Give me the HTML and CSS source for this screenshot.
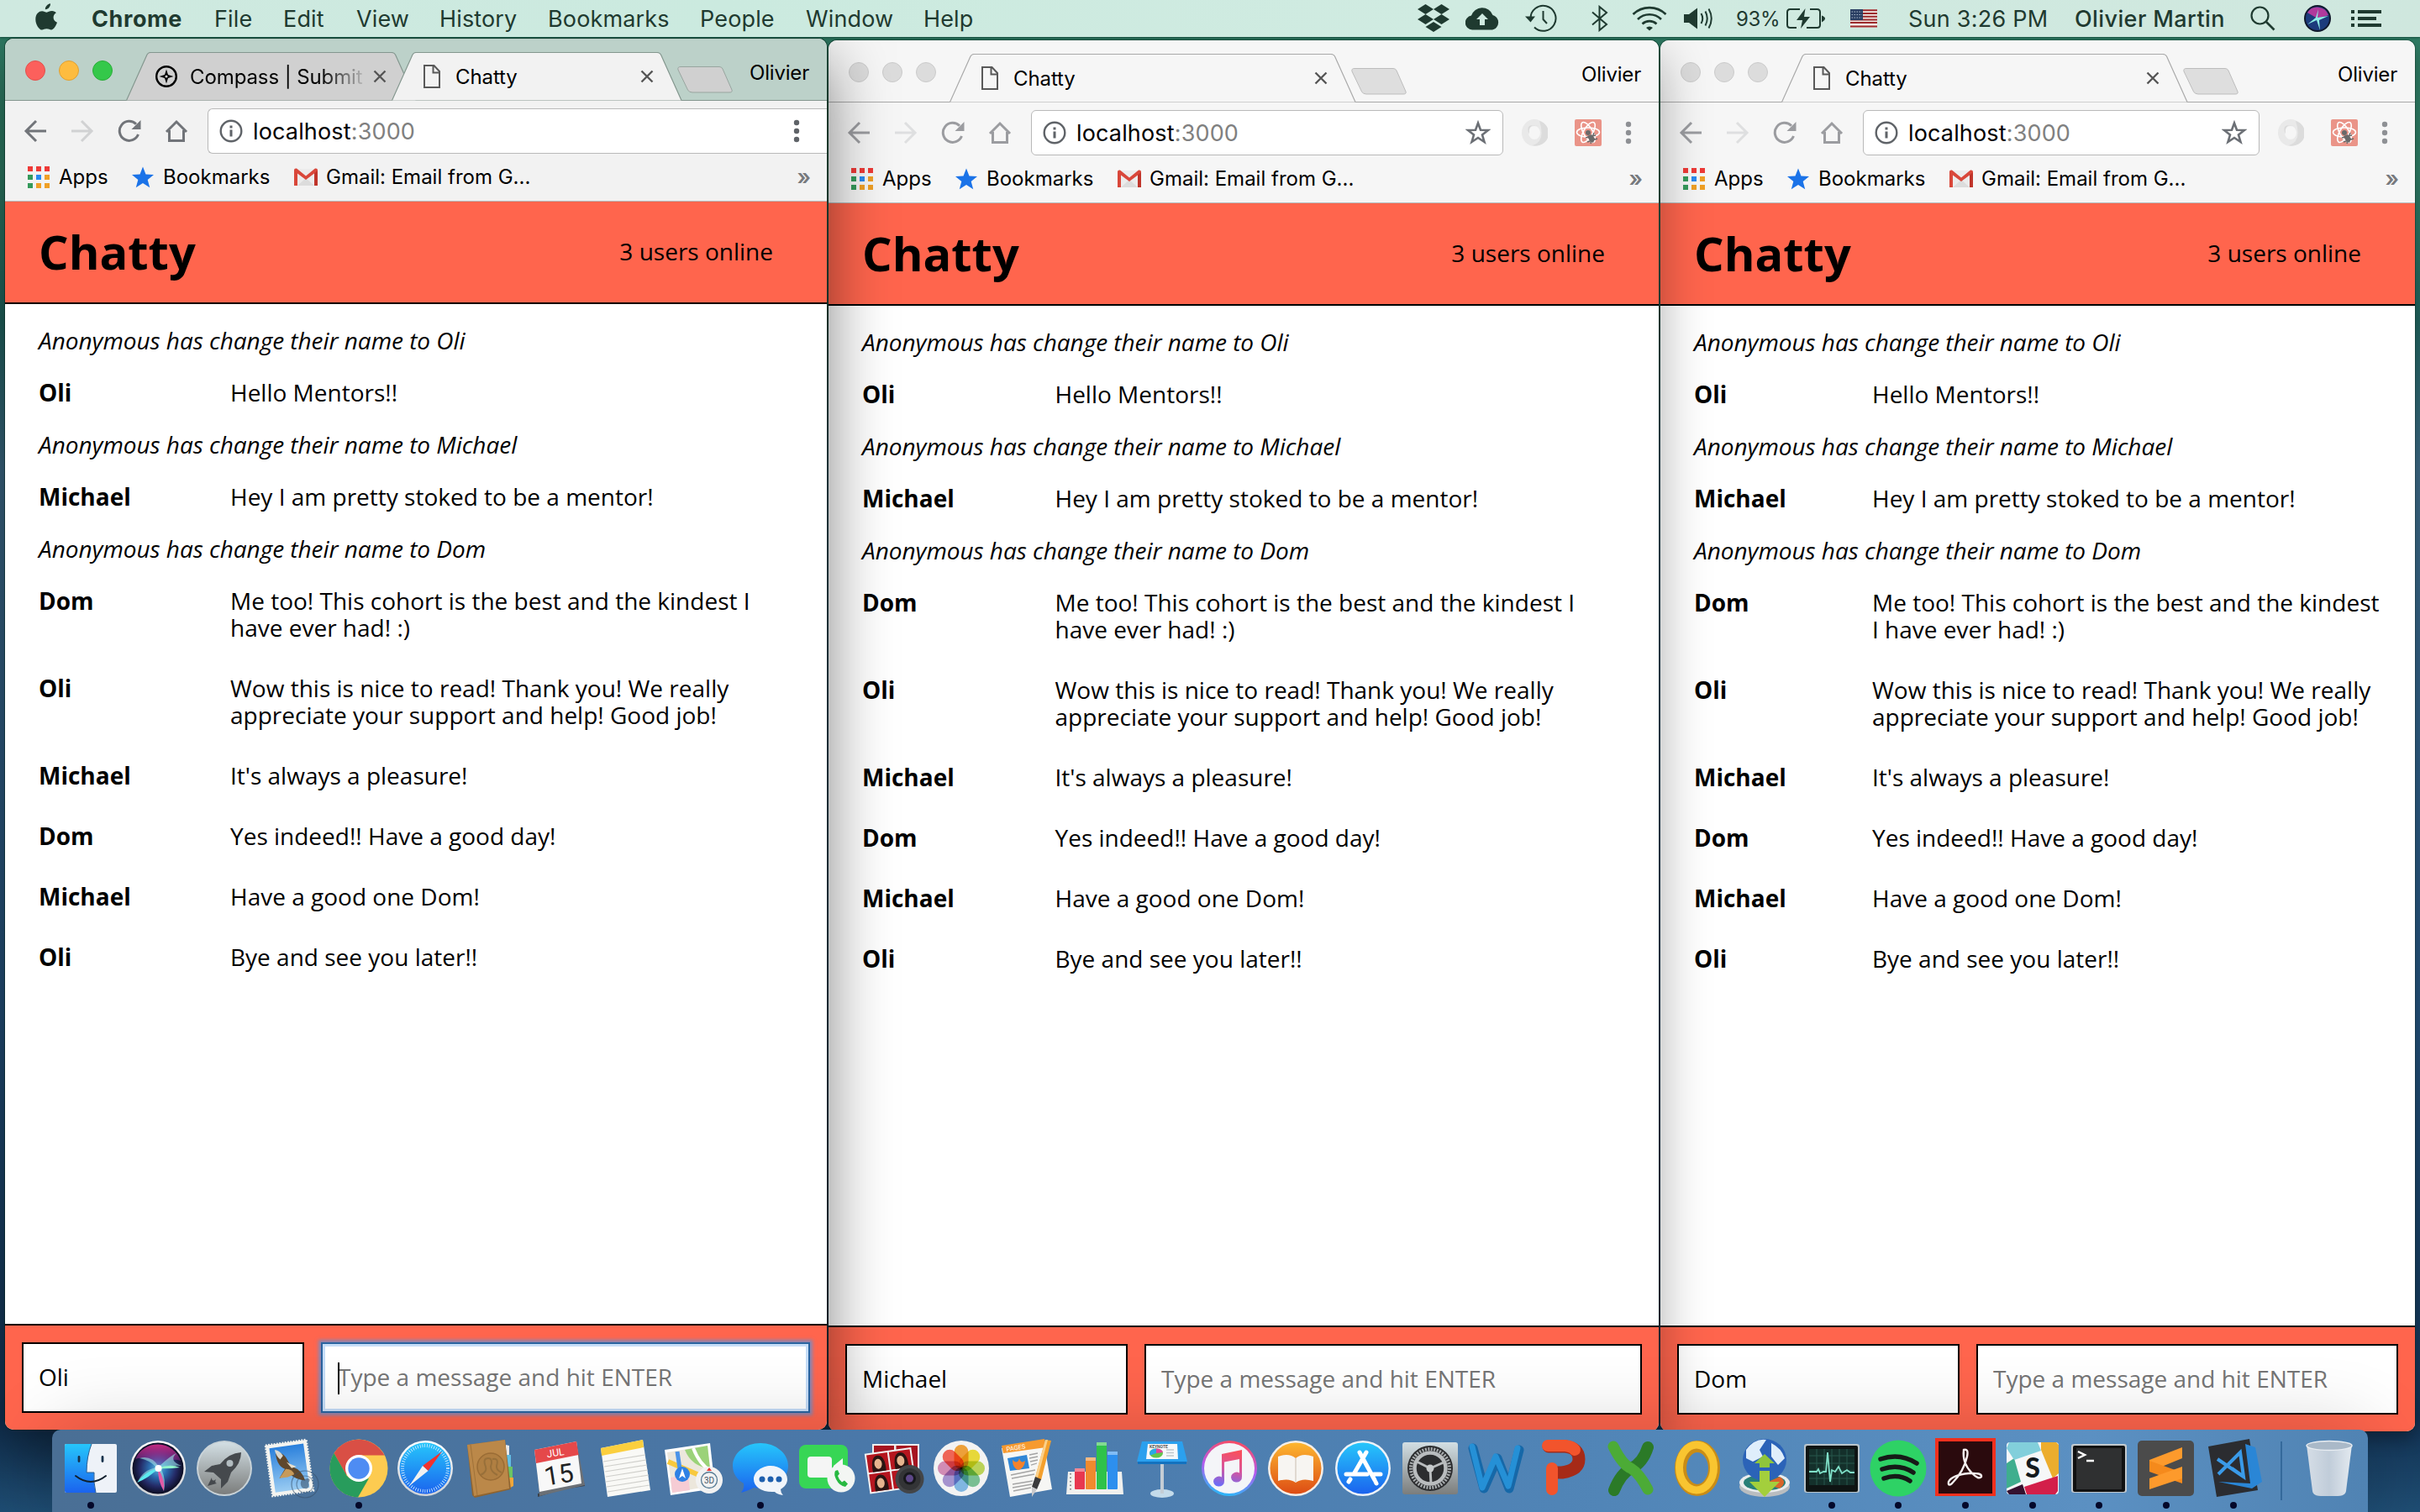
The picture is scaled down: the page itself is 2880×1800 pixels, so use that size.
FILE: index.html
```html
<!DOCTYPE html>
<html lang="en">
<head>
<meta charset="utf-8">
<title>Chatty</title>
<link rel="stylesheet" href="styles.css">
</head>
<body>
<svg class="defs" aria-hidden="true">
  <defs>
    <linearGradient id="gSilver" x1="0" y1="0" x2="0" y2="1"><stop offset="0" stop-color="#fff"/><stop offset="1" stop-color="#cfd2d6"/></linearGradient>
    <linearGradient id="gBlue" x1="0" y1="0" x2="0" y2="1"><stop offset="0" stop-color="#26c6fb"/><stop offset="1" stop-color="#1b63ee"/></linearGradient>
    <linearGradient id="gSky" x1="0" y1="0" x2="0" y2="1"><stop offset="0" stop-color="#2a80dc"/><stop offset="1" stop-color="#9accf2"/></linearGradient>
    <linearGradient id="gOrange" x1="0" y1="0" x2="0" y2="1"><stop offset="0" stop-color="#fdb62f"/><stop offset="1" stop-color="#dd4c14"/></linearGradient>
    <linearGradient id="gGray" x1="0" y1="0" x2="0" y2="1"><stop offset="0" stop-color="#d3dfe4"/><stop offset="1" stop-color="#7b7d7c"/></linearGradient>
    <linearGradient id="gTunes" x1="0.6" y1="0" x2="0.4" y2="1"><stop offset="0" stop-color="#fb4b5f"/><stop offset="0.5" stop-color="#b45bf0"/><stop offset="1" stop-color="#28b9f8"/></linearGradient>
    <linearGradient id="gNote" x1="0.6" y1="0" x2="0.4" y2="1"><stop offset="0" stop-color="#f94f5c"/><stop offset="0.5" stop-color="#d9559b"/><stop offset="1" stop-color="#6f6bf5"/></linearGradient>
    <radialGradient id="gSiri"><stop offset="0" stop-color="#5ab7e0"/><stop offset="0.35" stop-color="#2b6cae"/><stop offset="0.7" stop-color="#242a66"/><stop offset="1" stop-color="#0c0d22"/></radialGradient>
    <linearGradient id="gPink" x1="0" y1="0" x2="0" y2="1"><stop offset="0" stop-color="#c42a80"/><stop offset="1" stop-color="#8a2ba0" stop-opacity="0.2"/></linearGradient>
    <linearGradient id="gTrash" x1="0" y1="0" x2="1" y2="0"><stop offset="0" stop-color="#dfe4ea"/><stop offset="0.5" stop-color="#c9d2dc"/><stop offset="1" stop-color="#eef1f4"/></linearGradient>
  </defs>
  <symbol id="tab-narrow" viewBox="0 0 346 58"><path d="M0.5 57.5L25 3Q26.500 .5 29 .5H316Q319 .5 320.500 3L345 57.500"/></symbol>
  <symbol id="tab-wide" viewBox="0 0 484 58"><path d="M0.5 57.5L25 3Q26.500 .5 29 .5H454Q457 .5 458.500 3L483 57.500"/></symbol>
  <symbol id="newtab" viewBox="0 0 66 33"><path d="M4 .5H50Q53 .5 54 3L65 28Q66 31 62 31H18Q14 31 12.500 28L1 4Q0 .5 4 .5Z"/></symbol>
  <symbol id="page" viewBox="0 0 26 30"><path d="M4 2H15.500L22 9V28H4ZM14.500 2V10.500H22" fill="none" stroke="#595959" stroke-width="2"/></symbol>
  <symbol id="close" viewBox="0 0 16 16"><path d="M1.500 1.500L14.500 14.500M14.500 1.500L1.500 14.500" stroke="#555" stroke-width="2.400"/></symbol>
  <symbol id="back" viewBox="0 0 28 28"><path d="M27 14H3M15 2L3 14L15 26" fill="none" stroke="currentColor" stroke-width="3"/></symbol>
  <symbol id="forward" viewBox="0 0 28 28"><path d="M1 14H25M13 2L25 14L13 26" fill="none" stroke="currentColor" stroke-width="3"/></symbol>
  <symbol id="reload" viewBox="0 0 28 28"><path d="M24.500 18A11.500 11.500 0 1 1 22 5.800" fill="none" stroke="currentColor" stroke-width="3"/><path d="M27.500 1V12H16.500Z" fill="currentColor"/></symbol>
  <symbol id="home" viewBox="0 0 28 28"><path d="M2 15L14 3L26 15M5.500 13V25.500H22.500V13" fill="none" stroke="currentColor" stroke-width="3"/></symbol>
  <symbol id="info" viewBox="0 0 28 28"><circle cx="14" cy="14" r="12.300" fill="none" stroke="#5f6368" stroke-width="2.400"/><path d="M12.500 7.500h3v3h-3zM12.500 12.500h3v8h-3z" fill="#5f6368"/></symbol>
  <symbol id="star" viewBox="0 0 30 30"><path d="M15 3.500L18 11.800L27 12L20 17.500L22.500 26L15 21L7.500 26L10 17.500L3 12L12 11.800Z" fill="none" stroke="#6b6f75" stroke-width="2.600"/></symbol>
  <symbol id="dots" viewBox="0 0 8 28"><circle cx="4" cy="4" r="3.200"/><circle cx="4" cy="14" r="3.200"/><circle cx="4" cy="24" r="3.200"/></symbol>
  <symbol id="swirl" viewBox="0 0 32 32"><ellipse cx="16" cy="16" rx="11" ry="12" fill="none" stroke="#e9e9e9" stroke-width="8"/><path d="M21 8Q8 4 10 18Q4 4 21 8Z" fill="#d9d9d9"/><path d="M22 2A15 15 0 0 1 14 31Q30 26 22 2Z" fill="#dcdcdc"/></symbol>
  <symbol id="react" viewBox="0 0 32 32"><rect width="32" height="32" rx="2" fill="#ea9488"/><g fill="none" stroke="#fff" stroke-width="1.600"><ellipse cx="16" cy="15.500" rx="13.500" ry="5.500"/><ellipse cx="16" cy="15.500" rx="13.500" ry="5.500" transform="rotate(60 16 15.500)"/><ellipse cx="16" cy="15.500" rx="13.500" ry="5.500" transform="rotate(120 16 15.500)"/></g><circle cx="16" cy="16" r="3" fill="#6a6a6a"/><path d="M15 20L20 18L24 23L22 28L18 26Z" fill="#6a6a6a"/><path d="M13 22L25 19M15 27L27 23M19 29L23 16" stroke="#6a6a6a" stroke-width="1.500"/></symbol>
  <symbol id="apps" viewBox="0 0 26 26"><path fill="#ee3a37" d="M0 0h6v6H0zM10 0h6v6h-6zM20 0h6v6h-6z"/><path fill="#359a5b" d="M0 10h6v6H0zM0 20h6v6H0z"/><path fill="#2a8af0" d="M10 10h6v6h-6z"/><path fill="#efa026" d="M20 10h6v6h-6zM10 20h6v6h-6zM20 20h6v6h-6z"/></symbol>
  <symbol id="bluestar" viewBox="0 0 26 26"><path fill="#1b73e8" d="M13 .5L16.500 9.500L26 10L18.700 16L21.200 25.300L13 20L4.800 25.300L7.300 16L0 10L9.500 9.500Z"/></symbol>
  <symbol id="gmail" viewBox="0 0 28 22"><rect x="1" y="1" width="26" height="20" fill="#ececec"/><path d="M4 21L14 12L24 21Z" fill="#dcdcdc"/><path d="M0 2.500Q0 0 3 .5L14 9.500L25 .5Q28 0 28 2.500V21H24V6.500L14 14L4 6.500V21H0Z" fill="#d9473a"/><path d="M24 6.500L28 3V21H24Z" fill="#c0352b"/></symbol>
</svg>

<header class="menubar">
  <svg class="apple" viewBox="0 0 26 32"><path fill="currentColor" d="M18 .3C18.300 3.500 15.500 7.300 11.900 7.300C11.500 4 14.800 .7 18 .3ZM24.800 11.300C20 14.300 20.700 20.600 26 22.800C24.500 27 22 31.300 19 31.500C17 31.500 16.300 30.300 13.500 30.300C10.800 30.300 9.900 31.500 8 31.600C4.600 31.600 .3 25.300 .3 18.900C.3 12.500 4.300 9.200 8 9.200C10.400 9.200 12 10.700 13.700 10.700C15.200 10.700 17 9 20 9.100C22 9.200 23.800 10 24.800 11.300Z"/></svg>
  <nav class="menus"><b>Chrome</b><span>File</span><span>Edit</span><span>View</span><span>History</span><span>Bookmarks</span><span>People</span><span>Window</span><span>Help</span></nav>
  <div class="status">
    <svg class="s-dropbox" viewBox="0 0 38 34"><path fill="currentColor" d="M9.500 0L19 6L9.500 12L0 6ZM28.500 0L38 6L28.500 12L19 6ZM9.500 12L19 18L9.500 24L0 18ZM28.500 12L38 18L28.500 24L19 18ZM19 21L28.500 27L19 33L9.500 27Z"/></svg>
    <svg class="s-cloud" viewBox="0 0 40 28"><path fill="currentColor" d="M8 27.500A8.500 8.500 0 0 1 7 10.600A13.500 13.500 0 0 1 32.500 10A9 9 0 0 1 32 27.500Z"/><path fill="#cfeae0" d="M20 8L27 15H23V22H17V15H13Z"/></svg>
    <svg class="s-clock" viewBox="0 0 38 34"><path d="M6.500 17A15 15 0 1 1 11 27.500M21.500 8V18L26 23" fill="none" stroke="currentColor" stroke-width="2"/><path d="M0 14.500H12L6.500 21.500Z" fill="currentColor"/></svg>
    <svg class="s-bt" viewBox="0 0 20 32"><path d="M1 8.500L18 23L9.500 30V2L18 9L1 23.500" fill="none" stroke="currentColor" stroke-width="2"/></svg>
    <svg class="s-wifi" viewBox="0 0 42 30"><g fill="none" stroke="currentColor" stroke-width="2.600"><path d="M1.500 10A28 28 0 0 1 40.500 10M7 16A20 20 0 0 1 35 16M12.500 21.500A12.500 12.500 0 0 1 29.500 21.500"/></g><path d="M17 26A6 6 0 0 1 25 26L21 29.500Z" fill="currentColor"/></svg>
    <svg class="s-vol" viewBox="0 0 34 26"><path fill="currentColor" d="M0 8H6L16 .5V25.500L6 18H0Z"/><path d="M20.500 7Q24 13 20.500 19M25.500 4.500Q30 13 25.500 21.500M29.500 1.500Q36 13 29.500 24.500" fill="none" stroke="currentColor" stroke-width="2"/></svg>
    <span class="pct">93%</span>
    <svg class="s-batt" viewBox="0 0 46 26"><path d="M16 2H4.500Q1 2 1 5.500V20.500Q1 24 4.500 24H12M28 2H36.500Q40 2 40 5.500V20.500Q40 24 36.500 24H24" fill="none" stroke="currentColor" stroke-width="2"/><path d="M22.500 1L12 15H19L17 25L28 11H21Z" fill="currentColor"/><path d="M42 9.500Q46 11 46 13T42 17.500Z" fill="currentColor"/></svg>
    <svg class="s-flag" viewBox="0 0 32 22"><rect width="32" height="22" fill="#f1e9e4"/><path d="M0 1.200H32M0 5H32M0 8.700H32M0 12.400H32M0 16.100H32M0 20.500H32" stroke="#9c2a2c" stroke-width="2"/><rect width="15" height="13" fill="#2a3f63"/><path d="M1.500 3H14M1.500 6.500H14M1.500 10H14" stroke="#aab8c8" stroke-width="1" stroke-dasharray="1.500 1.500"/></svg>
    <span class="time">Sun 3:26 PM</span>
    <span class="who">Olivier Martin</span>
    <svg class="s-search" viewBox="0 0 30 30"><circle cx="11.500" cy="11.500" r="10" fill="none" stroke="currentColor" stroke-width="2.200"/><path d="M19 19L28.500 28.500" stroke="currentColor" stroke-width="2.600"/></svg>
    <svg class="s-siri" viewBox="0 0 32 32"><circle cx="16" cy="16" r="16" fill="#10182c"/><circle cx="16" cy="16" r="14" fill="#1c3b7c"/><path d="M4 9A14 14 0 0 1 29 12L16 16Z" fill="#b03a9c"/><path d="M16 15L29 13L18 18L19 30L15 18L4 23L14 15L17 5Z" fill="#8eeee4"/></svg>
    <svg class="s-list" viewBox="0 0 36 20"><path d="M0 2H4M8 2H36M0 10H4M8 10H30M0 18H4M8 18H36" stroke="currentColor" stroke-width="4"/></svg>
  </div>
</header>

<main class="desktop">
  <section class="window active win-a">
    <div class="tabstrip">
      <div class="lights"><i></i><i></i><i></i></div>
      <div class="tab behind"><svg class="shape"><use href="#tab-narrow"/></svg>
        <svg class="fav" viewBox="0 0 26 26"><circle cx="13" cy="13" r="11.800" fill="none" stroke="#000" stroke-width="2.400"/><path d="M13 4.500L15 11L21.500 13L15 15L13 21.500L11 15L4.500 13L11 11Z"/><circle cx="13" cy="13" r="1.600" fill="#d0d0d0"/></svg>
        <span class="title fade">Compass | Submit</span><svg class="x"><use href="#close"/></svg></div>
      <div class="tab front"><svg class="shape"><use href="#tab-narrow"/></svg><svg class="fav"><use href="#page"/></svg><span class="title">Chatty</span><svg class="x"><use href="#close"/></svg></div>
      <svg class="newtab"><use href="#newtab"/></svg>
      <span class="profile">Olivier</span>
    </div>
    <div class="toolbar">
      <div class="nav"><svg><use href="#back"/></svg><svg class="off"><use href="#forward"/></svg><svg><use href="#reload"/></svg><svg><use href="#home"/></svg></div>
      <div class="url bleed"><svg class="info"><use href="#info"/></svg><span>localhost<em>:3000</em></span><svg class="dots"><use href="#dots"/></svg></div>
    </div>
    <div class="bookmarks"><svg class="apps"><use href="#apps"/></svg><span class="b1">Apps</span><svg class="apps"><use href="#bluestar"/></svg><span class="b2">Bookmarks</span><svg class="gm"><use href="#gmail"/></svg><span>Gmail: Email from G...</span><span class="more">»</span></div>
    <div class="topbar"><h1>Chatty</h1><span>3 users online</span></div>
    <div class="messages">
      <p class="notice">Anonymous has change their name to Oli</p>
      <div class="msg"><b>Oli</b><p>Hello Mentors!!</p></div>
      <p class="notice">Anonymous has change their name to Michael</p>
      <div class="msg"><b>Michael</b><p>Hey I am pretty stoked to be a mentor!</p></div>
      <p class="notice">Anonymous has change their name to Dom</p>
      <div class="msg"><b>Dom</b><p>Me too! This cohort is the best and the kindest I<br>have ever had! :)</p></div>
      <div class="msg"><b>Oli</b><p>Wow this is nice to read! Thank you! We really<br>appreciate your support and help! Good job!</p></div>
      <div class="msg"><b>Michael</b><p>It's always a pleasure!</p></div>
      <div class="msg"><b>Dom</b><p>Yes indeed!! Have a good day!</p></div>
      <div class="msg"><b>Michael</b><p>Have a good one Dom!</p></div>
      <div class="msg"><b>Oli</b><p>Bye and see you later!!</p></div>
    </div>
    <div class="chatbar"><input class="name" value="Oli"><label class="focus"><input placeholder="Type a message and hit ENTER"></label></div>
  </section>

  <section class="window win-b">
    <div class="tabstrip">
      <div class="lights"><i></i><i></i><i></i></div>
      <div class="tab front wide"><svg class="shape"><use href="#tab-wide"/></svg><svg class="fav"><use href="#page"/></svg><span class="title">Chatty</span><svg class="x"><use href="#close"/></svg></div>
      <svg class="newtab"><use href="#newtab"/></svg>
      <span class="profile">Olivier</span>
    </div>
    <div class="toolbar">
      <div class="nav"><svg><use href="#back"/></svg><svg class="off"><use href="#forward"/></svg><svg><use href="#reload"/></svg><svg><use href="#home"/></svg></div>
      <div class="url"><svg class="info"><use href="#info"/></svg><span>localhost<em>:3000</em></span><svg class="star"><use href="#star"/></svg></div>
      <svg class="ext"><use href="#swirl"/></svg><svg class="ext"><use href="#react"/></svg><svg class="dots"><use href="#dots"/></svg>
    </div>
    <div class="bookmarks"><svg class="apps"><use href="#apps"/></svg><span class="b1">Apps</span><svg class="apps"><use href="#bluestar"/></svg><span class="b2">Bookmarks</span><svg class="gm"><use href="#gmail"/></svg><span>Gmail: Email from G...</span><span class="more">»</span></div>
    <div class="topbar"><h1>Chatty</h1><span>3 users online</span></div>
    <div class="messages">
      <p class="notice">Anonymous has change their name to Oli</p>
      <div class="msg"><b>Oli</b><p>Hello Mentors!!</p></div>
      <p class="notice">Anonymous has change their name to Michael</p>
      <div class="msg"><b>Michael</b><p>Hey I am pretty stoked to be a mentor!</p></div>
      <p class="notice">Anonymous has change their name to Dom</p>
      <div class="msg"><b>Dom</b><p>Me too! This cohort is the best and the kindest I<br>have ever had! :)</p></div>
      <div class="msg"><b>Oli</b><p>Wow this is nice to read! Thank you! We really<br>appreciate your support and help! Good job!</p></div>
      <div class="msg"><b>Michael</b><p>It's always a pleasure!</p></div>
      <div class="msg"><b>Dom</b><p>Yes indeed!! Have a good day!</p></div>
      <div class="msg"><b>Michael</b><p>Have a good one Dom!</p></div>
      <div class="msg"><b>Oli</b><p>Bye and see you later!!</p></div>
    </div>
    <div class="chatbar"><input class="name" value="Michael"><label><input placeholder="Type a message and hit ENTER"></label></div>
  </section>

  <section class="window win-c">
    <div class="tabstrip">
      <div class="lights"><i></i><i></i><i></i></div>
      <div class="tab front wide"><svg class="shape"><use href="#tab-wide"/></svg><svg class="fav"><use href="#page"/></svg><span class="title">Chatty</span><svg class="x"><use href="#close"/></svg></div>
      <svg class="newtab"><use href="#newtab"/></svg>
      <span class="profile">Olivier</span>
    </div>
    <div class="toolbar">
      <div class="nav"><svg><use href="#back"/></svg><svg class="off"><use href="#forward"/></svg><svg><use href="#reload"/></svg><svg><use href="#home"/></svg></div>
      <div class="url"><svg class="info"><use href="#info"/></svg><span>localhost<em>:3000</em></span><svg class="star"><use href="#star"/></svg></div>
      <svg class="ext"><use href="#swirl"/></svg><svg class="ext"><use href="#react"/></svg><svg class="dots"><use href="#dots"/></svg>
    </div>
    <div class="bookmarks"><svg class="apps"><use href="#apps"/></svg><span class="b1">Apps</span><svg class="apps"><use href="#bluestar"/></svg><span class="b2">Bookmarks</span><svg class="gm"><use href="#gmail"/></svg><span>Gmail: Email from G...</span><span class="more">»</span></div>
    <div class="topbar"><h1>Chatty</h1><span>3 users online</span></div>
    <div class="messages">
      <p class="notice">Anonymous has change their name to Oli</p>
      <div class="msg"><b>Oli</b><p>Hello Mentors!!</p></div>
      <p class="notice">Anonymous has change their name to Michael</p>
      <div class="msg"><b>Michael</b><p>Hey I am pretty stoked to be a mentor!</p></div>
      <p class="notice">Anonymous has change their name to Dom</p>
      <div class="msg"><b>Dom</b><p>Me too! This cohort is the best and the kindest<br>I have ever had! :)</p></div>
      <div class="msg"><b>Oli</b><p>Wow this is nice to read! Thank you! We really<br>appreciate your support and help! Good job!</p></div>
      <div class="msg"><b>Michael</b><p>It's always a pleasure!</p></div>
      <div class="msg"><b>Dom</b><p>Yes indeed!! Have a good day!</p></div>
      <div class="msg"><b>Michael</b><p>Have a good one Dom!</p></div>
      <div class="msg"><b>Oli</b><p>Bye and see you later!!</p></div>
    </div>
    <div class="chatbar"><input class="name" value="Dom"><label><input placeholder="Type a message and hit ENTER"></label></div>
  </section>
</main>

<footer class="dock">
  <!-- Finder -->
  <div class="app on"><svg viewBox="0 0 72 72"><rect x="5" y="7" width="62" height="58" rx="2" fill="#eef2f8"/><path d="M7 7H37Q31 22 31 41H40Q39 52 42 65H7Q5 65 5 63V9Q5 7 7 7Z" fill="url(#gBlue)"/><path d="M22 22.500V27.500M50 22.500V27.500" stroke="#16324c" stroke-width="2.800" stroke-linecap="round"/><path d="M37 7Q31 22 31 41H40Q39 52 42 65" fill="none" stroke="#2a5f94" stroke-width="1"/><path d="M18 45Q36 59 54 45" fill="none" stroke="#10202e" stroke-width="2" stroke-linecap="round"/></svg></div>
  <!-- Siri -->
  <div class="app"><svg viewBox="0 0 72 72"><circle cx="36" cy="36" r="33" fill="url(#gSilver)"/><circle cx="36" cy="36" r="30.500" fill="url(#gSiri)"/><path d="M9 25A29 29 0 0 1 63 27Q48 22 36 36Q24 20 9 25Z" fill="url(#gPink)"/><path d="M37 34Q52 20 58 18Q48 27 64 33Q48 32 40 37Q46 50 43 63Q38 50 36 39Q24 42 12 52Q18 38 34 35Q26 26 14 24Q28 20 37 34Z" fill="#9be6e8" opacity=".6"/><path d="M36 36Q50 30 62 35Q48 37 36 36Z" fill="#8ff5cc"/><path d="M36 36Q20 40 11 53Q26 47 36 36Z" fill="#5ceaf0"/><path d="M36 36Q45 50 43 63Q36 52 36 36Z" fill="#e35aa6"/><circle cx="36.500" cy="36" r="4" fill="#fff"/></svg></div>
  <!-- Launchpad -->
  <div class="app"><svg viewBox="0 0 72 72"><circle cx="36" cy="36" r="33" fill="#c9d3d8"/><circle cx="36" cy="36" r="31" fill="url(#gGray)"/><path d="M56 17Q41 18 31 31L21 33L12 40L23 41L32 49L32 60L40 52L44 41Q56 30 56 17Z" fill="#45494d"/><path d="M21 47L16 57L27 54Q24 53 26 49Q21 53 21 47Z" fill="#45494d"/><circle cx="42.500" cy="30" r="4" fill="#b2bcc0"/></svg></div>
  <!-- Mail -->
  <div class="app"><svg viewBox="0 0 72 72"><g transform="rotate(-8 34 36)"><rect x="9" y="5" width="49" height="61" fill="#f4f4f0" stroke="#f4f4f0" stroke-width="2.500" stroke-dasharray="1.800 1.500"/><rect x="13" y="9" width="41" height="53" fill="url(#gSky)"/><path d="M20 13Q30 17 33 27Q35 33 38 35Q48 40 50 53Q40 51 33 43L20 46L28 36Q18 30 20 13Z" fill="#5f472c"/><path d="M19 12Q24 12 28 20L24 24Q20 20 19 12Z" fill="#d8d8d2"/><path d="M20 46L29 36Q37 37 38 44L30 46Z" fill="#c79a5a"/><path d="M31 28Q36 32 42 35L36 36Z" fill="#e8dfcc"/></g><circle cx="52" cy="55" r="16" fill="none" stroke="#38526c" stroke-width="1.200" opacity=".6"/><circle cx="52" cy="55" r="10" fill="none" stroke="#38526c" stroke-width="1.200" opacity=".5"/><path d="M52 49C58 46 59 50 56 53C58 59 54 61 52 60C48 61 45 54 48 50Z" fill="#38526c" opacity=".6"/></svg></div>
  <!-- Chrome -->
  <div class="app on"><svg viewBox="0 0 72 72"><circle cx="36" cy="36" r="34.500" fill="#fdcb50"/><path d="M21 44L6.500 18A34.500 34.500 0 0 1 66.500 20.500H36Z" fill="#d94f45"/><path d="M6.500 18L21.500 44.500Q28 52 36 51L48 48L35 70.500A34.500 34.500 0 0 1 6.500 18Z" fill="#289c5c"/><circle cx="36" cy="36" r="16" fill="#fff"/><circle cx="36" cy="36" r="12.700" fill="#4e8cf3"/></svg></div>
  <!-- Safari -->
  <div class="app"><svg viewBox="0 0 72 72"><circle cx="36" cy="36" r="33" fill="url(#gSilver)"/><circle cx="36" cy="36" r="30.500" fill="url(#gBlue)"/><circle cx="36" cy="36" r="27" fill="none" stroke="#d6efff" stroke-width="4" stroke-dasharray=".8 2"/><path d="M56 16L39.500 39L33 33Z" fill="#f2312d"/><path d="M17 57L39.500 39L33 33Z" fill="#f1f1f1"/></svg></div>
  <!-- Contacts -->
  <div class="app"><svg viewBox="0 0 72 72"><path d="M52 8L56 9V20H52Z" fill="#e9e9e9"/><path d="M52 20H58V35H52Z" fill="#62bfe6"/><path d="M52 34H60V48H52Z" fill="#6bc463"/><path d="M52 47H61V57L54 61Z" fill="#f2a73a"/><path d="M6 8L51 2L58 61L15 71L12 68Z" fill="#8f6430"/><path d="M6 8L51 2L56 60L14 69Z" fill="#bb8849"/><path d="M10 8L18 68" stroke="#9f7239" stroke-width="1"/><circle cx="34" cy="34" r="16" fill="#b07f42" stroke="#9a6c35" stroke-width="1.500"/><path d="M22 44Q30 40 28 34Q24 24 31 24Q37 24 34 34Q34 40 42 44M36 25Q44 23 41 33Q40 38 47 41" fill="none" stroke="#98703a" stroke-width="2"/></svg></div>
  <!-- Calendar -->
  <div class="app"><svg viewBox="0 0 72 72"><path d="M10 66L66 57L65 53L10 70Z" fill="#3b3f45"/><path d="M7 14L56 4L66 56L12 69Z" fill="#6b7076"/><path d="M6 14L56 4L62 54L12 64Z" fill="#f8f8f8"/><path d="M6 14L56 4L58.500 20L8 30Z" fill="#e5484a"/><g transform="rotate(-9 36 36)" font-family="Roboto, sans-serif" text-anchor="middle"><text x="34" y="21" font-size="12" fill="#fff">JUL</text><text x="34" y="54" font-size="31" fill="#222">15</text></g></svg></div>
  <!-- Notes -->
  <div class="app"><svg viewBox="0 0 72 72"><path d="M6 12L56 2L65 62L14 70Z" fill="#f9f9f6"/><path d="M9 28L59 20M10 34L60 26M11 40L61 32M12 46L62 38M12 52L63 44M13 58L63 50M14 64L64 56" stroke="#d0d0cc" stroke-width="1.200"/><path d="M6 12L56 2L57 11L7 21Z" fill="#fbcf3e"/></svg></div>
  <!-- Maps -->
  <div class="app"><svg viewBox="0 0 72 72"><path d="M2 14L56 6L62 60L9 68Z" fill="#fff"/><path d="M5 17L53 9L58 57L11 65Z" fill="#ece7dc"/><path d="M26 14L53 9L56 36Q34 34 26 14Z" fill="#9bd279"/><path d="M9 47L30 44L32 62L11 65Z" fill="#f6ccd4"/><path d="M6 28L52 48" stroke="#f8c93d" stroke-width="6"/><path d="M17 16L22 50" stroke="#4b93e8" stroke-width="5"/><path d="M36 12Q44 32 56 38" stroke="#fff" stroke-width="4" fill="none"/><circle cx="23" cy="43" r="9" fill="#2d81e5"/><path d="M23 36L27 48L23 45L19 48Z" fill="#fff"/><circle cx="55" cy="50" r="16" fill="#f2f2f2"/><circle cx="55" cy="50" r="9.500" fill="none" stroke="#577b94" stroke-width="1.300"/><path d="M55 35L58 39H52Z" fill="#e33"/><text x="55" y="53.500" font-size="10" font-family="Roboto, sans-serif" text-anchor="middle" fill="#456">3D</text></svg></div>
  <!-- Messages -->
  <div class="app on"><svg viewBox="0 0 72 72"><path d="M36 6C18 6 3 18 3 33C3 43 9 50 16 54Q17 60 13 65Q23 62 28 59C50 63 69 50 69 33C69 18 54 6 36 6Z" fill="url(#gBlue)"/><path d="M48 33C59 33 68 40 68 49C68 54 65 58 60 61Q60 65 63 68Q56 67 53 64C38 65 28 58 28 49C28 40 38 33 48 33Z" fill="#f0f5fb"/><g fill="#1d5fae"><circle cx="38" cy="49" r="3.500"/><circle cx="48" cy="49" r="3.500"/><circle cx="58" cy="49" r="3.500"/></g></svg></div>
  <!-- FaceTime -->
  <div class="app"><svg viewBox="0 0 72 72"><rect x="3" y="8" width="58" height="52" rx="8" fill="#37d655"/><rect x="13" y="22" width="29" height="25" rx="4" fill="#f5f5f5"/><path d="M44 33L55 24V45L44 37Z" fill="#f5f5f5"/><circle cx="53" cy="48" r="16.500" fill="#f3f6f3"/><path d="M46 39Q44 43 47 49Q51 57 58 58L61 54.500L57 50.500L54 52.500Q50 49 49 45L51 42.500L49 38Z" fill="#28b941"/></svg></div>
  <!-- Photo Booth -->
  <div class="app"><svg viewBox="0 0 72 72"><rect x="10" y="7" width="56" height="33" fill="#eee"/><path d="M12 9H36V38H12ZM38.500 9H64V38H38.500Z" fill="#a61420"/><g transform="rotate(-8 30 40)"><rect x="4" y="15" width="56" height="48" fill="#f2f2f2"/><path d="M6 17H31V38H6ZM33 17H58V38H33ZM6 40H31V61H6ZM33 40H58V61H33Z" fill="#b5161f"/><g fill="#2a1513"><path d="M11 38Q10 19 19 19Q28 20 27 38ZM38 38Q37 19 46 19Q55 20 54 38ZM11 61Q10 42 19 42Q28 43 27 61Z"/></g><g fill="#e6b48f"><ellipse cx="18.500" cy="29" rx="4.500" ry="6"/><ellipse cx="45.500" cy="29" rx="4.500" ry="6"/><ellipse cx="18.500" cy="52" rx="4.500" ry="6"/></g></g><circle cx="54.500" cy="49" r="17" fill="#434547"/><circle cx="54.500" cy="49" r="13" fill="#333436"/><circle cx="54.500" cy="48" r="7.500" fill="#17181c"/><circle cx="54.500" cy="48" r="4.500" fill="#5d4788"/></svg></div>
  <!-- Photos -->
  <div class="app"><svg class="petals" viewBox="0 0 72 72"><circle cx="36" cy="36" r="33" fill="#f3f3f3"/><rect x="27.500" y="8" width="17" height="29" rx="8.500" fill="#f9a83c"/><rect x="27.500" y="8" width="17" height="29" rx="8.500" fill="#f3e33c" transform="rotate(45 36 36)"/><rect x="27.500" y="8" width="17" height="29" rx="8.500" fill="#c3dd5c" transform="rotate(90 36 36)"/><rect x="27.500" y="8" width="17" height="29" rx="8.500" fill="#7fc99a" transform="rotate(135 36 36)"/><rect x="27.500" y="8" width="17" height="29" rx="8.500" fill="#86bfec" transform="rotate(180 36 36)"/><rect x="27.500" y="8" width="17" height="29" rx="8.500" fill="#ad9ad8" transform="rotate(225 36 36)"/><rect x="27.500" y="8" width="17" height="29" rx="8.500" fill="#dc93bd" transform="rotate(270 36 36)"/><rect x="27.500" y="8" width="17" height="29" rx="8.500" fill="#fb6a5a" transform="rotate(315 36 36)"/></svg></div>
  <!-- Pages -->
  <div class="app"><svg viewBox="0 0 72 72"><path d="M5 12L55 3L65 61L15 70Z" fill="#f6f6f4"/><path d="M5 9L56 1L58 11L7 18Z" fill="#f79a2e"/><text x="11" y="16" font-size="7.500" font-family="Roboto, sans-serif" fill="#fff" transform="rotate(-9 11 16)">PAGES</text><path d="M12 24L35 20L38 36L15 39Z" fill="#2f86d6"/><path d="M18 26Q24 32 26 24Q28 31 33 27Q32 36 25 38Q18 36 18 26Z" fill="#f5822a"/><path d="M38 20L48 18M38 24L48 22M39 28L48 26M40 32L47 30M16 44L45 38M17 48L44 43M18 55L42 51M18 59L41 55M19 63L40 59" stroke="#a4a4a4" stroke-width="1.300"/><path d="M57 2L64 3L52 50L45 47Z" fill="#f4a02c"/><path d="M57 2L60 2L48 47L45 46Z" fill="#fbd08a"/><path d="M45 46L52 49L47 61L41 58Z" fill="#3a3a3c"/><path d="M41 58L47 61L41 70Z" fill="#c9c9cb"/></svg></div>
  <!-- Numbers -->
  <div class="app"><svg viewBox="0 0 72 72"><path d="M4 40H68L70 67H2Z" fill="#f0f0ee"/><path d="M7 42V64" stroke="#8c8c8c" stroke-width="2" stroke-dasharray="1.500 3"/><rect x="12" y="36" width="12" height="25" rx="1" fill="#e8384f"/><rect x="25" y="23" width="12" height="38" rx="1" fill="#f08a2e"/><rect x="38" y="5" width="12" height="56" rx="1" fill="#2fc24a"/><rect x="51" y="16" width="12" height="45" rx="1" fill="#2d8fee"/><path d="M12 36H24V40H12ZM25 23H37V27H25ZM38 5H50V9H38ZM51 16H63V20H51Z" fill="#fff" opacity=".4"/></svg></div>
  <!-- Keynote -->
  <div class="app"><svg viewBox="0 0 72 72"><ellipse cx="36" cy="66" rx="14" ry="5" fill="#c4dbea"/><path d="M34 30H38V66H34Z" fill="#c4cdd5"/><path d="M7 26H65V31H7Z" fill="#1372bf"/><path d="M12 4H60L66 28H6Z" fill="#2ba0ee"/><path d="M19 7H54L55 25H17Z" fill="#f6f8fa"/><text x="21" y="12" font-size="5" font-weight="700" font-family="Roboto, sans-serif" fill="#555">KEYNOTE</text><ellipse cx="29" cy="18" rx="8" ry="5.500" fill="#62c64c"/><path d="M29 18V12.500A8 5.500 0 0 0 22 20.500Z" fill="#2aa8e8"/><path d="M29 18V12.500A8 5.500 0 0 1 37 17Z" fill="#e2479c"/><path d="M41 14H50M41 17.500H50M41 21H50" stroke="#c0c6cc" stroke-width="1.500"/></svg></div>
  <!-- iTunes -->
  <div class="app"><svg viewBox="0 0 72 72"><circle cx="36" cy="36" r="33" fill="url(#gTunes)"/><circle cx="36" cy="36" r="30" fill="#f4f5f8"/><path d="M27 19L51 14V46A6.500 6 0 1 1 48 41.500V25L30 28.500V51A6.500 6 0 1 1 27 46.500Z" fill="url(#gNote)"/></svg></div>
  <!-- iBooks -->
  <div class="app"><svg viewBox="0 0 72 72"><circle cx="36" cy="36" r="33" fill="#f5efe8"/><circle cx="36" cy="36" r="30.500" fill="url(#gOrange)"/><path d="M36 24Q28 17 15 22V51Q28 47 36 53Q44 47 57 51V22Q44 17 36 24Z" fill="#f7f5f2"/><path d="M36 24V52" stroke="#d9cfc6" stroke-width="1.500"/></svg></div>
  <!-- App Store -->
  <div class="app"><svg viewBox="0 0 72 72"><circle cx="36" cy="36" r="33" fill="#eef3f8"/><circle cx="36" cy="36" r="30.500" fill="url(#gBlue)"/><path d="M32 17L50 50M40 17L25 43M16 43H41M49 43H57M21 49L19 52M51 52L52 54" stroke="#fff" stroke-width="5" stroke-linecap="round"/></svg></div>
  <!-- System Preferences -->
  <div class="app"><svg viewBox="0 0 72 72"><rect x="3" y="5" width="66" height="62" rx="3" fill="url(#gGray)"/><circle cx="36" cy="36" r="27" fill="#2c2d2f"/><circle cx="36" cy="36" r="23" fill="none" stroke="#a9adaf" stroke-width="4" stroke-dasharray="2 1.500"/><circle cx="36" cy="36" r="18.500" fill="none" stroke="#b9bcbe" stroke-width="4.500"/><path d="M36 36L20 28M36 36L52 29M36 36L37 54" stroke="#b9bcbe" stroke-width="3"/><circle cx="36" cy="36" r="4.500" fill="#c6c9ca"/></svg></div>
  <!-- Word -->
  <div class="app"><svg viewBox="0 0 72 72"><path d="M8 12L21 60L37 24L51 60L63 14" fill="none" stroke="#1668a8" stroke-width="11" stroke-linecap="round" stroke-linejoin="round"/><path d="M7 10L19 59L35 22L50 57L61 12" fill="none" stroke="#2590d6" stroke-width="7" stroke-linecap="round" stroke-linejoin="round"/></svg></div>
  <!-- PowerPoint -->
  <div class="app"><svg viewBox="0 0 72 72"><path d="M18 10H38Q54 12 54 25T34 41H27" fill="none" stroke="#a62a17" stroke-width="15" stroke-linecap="round"/><path d="M17 9H38Q46 10 49 14M22 36V61" fill="none" stroke="#f2542c" stroke-width="14" stroke-linecap="round"/></svg></div>
  <!-- Excel -->
  <div class="app"><svg viewBox="0 0 72 72"><path d="M56 11Q50 30 36 36Q24 42 16 62" fill="none" stroke="#2b7a27" stroke-width="14" stroke-linecap="round"/><path d="M15 10Q26 32 36 36Q46 42 56 61" fill="none" stroke="#4cab36" stroke-width="13" stroke-linecap="round"/></svg></div>
  <!-- Outlook -->
  <div class="app"><svg viewBox="0 0 72 72"><ellipse cx="36" cy="36" rx="20" ry="26" fill="none" stroke="#c98c16" stroke-width="14"/><ellipse cx="35" cy="35" rx="20.500" ry="27" fill="none" stroke="#f9c530" stroke-width="9"/></svg></div>
  <!-- Download manager -->
  <div class="app"><svg viewBox="0 0 72 72"><ellipse cx="36" cy="58" rx="30" ry="12" fill="#b9bdc0"/><ellipse cx="36" cy="53" rx="30" ry="12" fill="#e9eced"/><ellipse cx="36" cy="53" rx="25" ry="9.500" fill="#287f77"/><path d="M36 54L54 46Q64 52 54 60Z" fill="#d8652a"/><ellipse cx="36" cy="26" rx="26" ry="25" fill="#2b63b8"/><path d="M14 14Q24 0 38 2L30 14L34 22L22 28L14 24ZM44 6Q56 12 60 24L52 32L44 22Z" fill="#dfeefb"/><path d="M36 19L48 30H42V35H30V30H24Z" fill="#8fc53c"/><path d="M30 39H42V52H54L36 70L18 52H30Z" fill="#a3cf3c"/></svg></div>
  <!-- Activity Monitor -->
  <div class="app on"><svg viewBox="0 0 72 72"><rect x="3" y="7" width="66" height="58" rx="3" fill="#b9c4cb"/><rect x="5" y="9" width="62" height="55" rx="2" fill="#0e1413"/><rect x="9" y="13" width="54" height="43" fill="#14302b"/><path d="M18 13V56M27 13V56M36 13V56M45 13V56M54 13V56M9 21H63M9 30H63M9 39H63M9 48H63" stroke="#27564d" stroke-width="1"/><path d="M9 40H18L20 37L22 42L26 40H29L31 17L34 52L36 38L40 40L44 34L48 42L54 38L58 41H63" fill="none" stroke="#7fe0c8" stroke-width="1.800"/></svg></div>
  <!-- Spotify -->
  <div class="app on"><svg viewBox="0 0 72 72"><circle cx="36" cy="36" r="33.500" fill="#2ed265"/><path d="M15 25Q38 17 58 30M17 37Q37 30 54 41M19 48Q36 42 50 51" fill="none" stroke="#161a17" stroke-width="5.500" stroke-linecap="round"/></svg></div>
  <!-- Acrobat -->
  <div class="app on"><svg viewBox="0 0 72 72"><rect x="0" y="0" width="72" height="69" fill="#f0301d"/><rect x="4" y="4" width="64" height="62" fill="#2a0a0d"/><path d="M34 14Q40 12 38 22Q34 40 20 54Q15 58 16 52Q20 44 40 42Q56 41 55 46Q52 50 44 42Q32 30 34 14Z" fill="none" stroke="#f4eeee" stroke-width="2.400"/></svg></div>
  <!-- Slack -->
  <div class="app on"><svg viewBox="0 0 72 72"><rect x="5" y="5" width="62" height="62" rx="4" fill="#f6f7f8"/><path d="M5 30L14 24L22 52L5 60Z" fill="#3fae8e"/><path d="M8 5H42L46 15L14 26L5 12Z" fill="#82cfdb"/><path d="M46 5H64L67 8V42L60 48L46 14Z" fill="#ecad2e"/><path d="M26 58L66 45V63L63 67H29Z" fill="#d31f4a"/><path d="M5 63L24 55L28 67H8Z" fill="#35112f"/><text x="36" y="47" font-size="32" font-weight="900" font-family="Lato, sans-serif" text-anchor="middle" fill="#141a1e">S</text></svg></div>
  <!-- Terminal -->
  <div class="app on"><svg viewBox="0 0 72 72"><rect x="3" y="7" width="66" height="58" rx="3" fill="#c2c9ce"/><rect x="5" y="9" width="62" height="55" rx="2" fill="#111"/><rect x="9" y="12" width="54" height="49" fill="#2f3031"/><path d="M11 16L19 20L11 24M21 27H30" fill="none" stroke="#fff" stroke-width="2.500"/></svg></div>
  <!-- Sublime Text -->
  <div class="app on"><svg viewBox="0 0 72 72"><rect x="2" y="3" width="67" height="66" rx="5" fill="#4b4b4b"/><path d="M16 26L55 11V24L16 40Z" fill="#fd9a2c"/><path d="M16 27L55 41V54L16 40Z" fill="#f58a1c"/><path d="M16 48L55 34V48L16 61Z" fill="#fd9a2c"/></svg></div>
  <!-- VS Code -->
  <div class="app on"><svg viewBox="0 0 72 72"><path d="M6 10L55 1L65 62L16 70Z" fill="#2b2c30"/><path d="M50 7L62 11L70 52L58 60L18 52L56 54Z" fill="#2a86d6"/><path d="M17 25L48 46M18 43L44 17L48 46L34 36" fill="none" stroke="#3a9ae8" stroke-width="4"/></svg></div>
  <i class="divider"></i>
  <!-- Trash -->
  <div class="app trash"><svg viewBox="0 0 72 72"><path d="M9 8L16 63Q17 69 26 69H46Q55 69 56 63L63 8Z" fill="url(#gTrash)" opacity=".93"/><ellipse cx="36" cy="9" rx="27" ry="5.500" fill="#aab9c8" stroke="#e8edf2" stroke-width="1.500"/></svg></div>
</footer>
</body>
</html>
```
FILE: styles.css
```css
* { box-sizing: border-box; }
html, body { margin: 0; padding: 0; }
body {
  width: 2880px;
  height: 1800px;
  overflow: hidden;
  position: relative;
  display: flex;
  flex-direction: column;
  font-family: Inter, "Liberation Sans", sans-serif;
  color: #000;
  background: linear-gradient(180deg, #2f7a63 0, #2e7c64 200px, #20625d 380px, #3b6682 560px, #2d5a80 900px, #234f78 1200px, #173d60 1500px, #123253 1690px, #1f4d73 1800px);
}
p, h1 { margin: 0; }
svg { display: block; flex: none; }
.defs { position: absolute; width: 0; height: 0; }

/* Menu bar */
.menubar {
  position: relative;
  z-index: 10;
  height: 44px;
  flex: none;
  display: flex;
  align-items: center;
  padding: 0 46px 0 42px;
  font-size: 27px;
  letter-spacing: 0.15px;
  color: #1f3a30;
  background: linear-gradient(90deg, #cfe9e0, #cbeadf 30%, #d0ebe1 60%, #cfe7de);
  box-shadow: 0 1px 2px rgba(0, 40, 30, .5);
}
.apple { width: 26px; height: 32px; margin: -4px 41px 0 0; }
.menus { display: flex; white-space: nowrap; }
.menus > * { width: 126px; }
.menus b { width: 146px; font-weight: 700; letter-spacing: 0.6px; }
.menus > :nth-child(2) { width: 82px; }
.menus > :nth-child(3) { width: 87px; }
.menus > :nth-child(4) { width: 99px; }
.menus > :nth-child(5) { width: 129px; }
.menus > :nth-child(6) { width: 181px; }
.menus > :nth-child(8) { width: 140px; }
.status { margin-left: auto; display: flex; align-items: center; white-space: nowrap; }
.s-dropbox { width: 38px; height: 34px; margin-right: 19px; }
.s-cloud { width: 40px; height: 28px; margin-right: 31px; }
.s-clock { width: 38px; height: 34px; margin-right: 41px; }
.s-bt { width: 20px; height: 32px; margin-right: 28px; }
.s-wifi { width: 42px; height: 30px; margin-right: 20px; }
.s-vol { width: 34px; height: 26px; margin-right: 28px; }
.pct { width: 60px; font-size: 24px; letter-spacing: -0.4px; }
.s-batt { width: 46px; height: 26px; margin-right: 30px; }
.s-flag { width: 32px; height: 22px; margin-right: 37px; }
.time { width: 198px; letter-spacing: 0.25px; }
.who { width: 209px; font-weight: 500; letter-spacing: 0.4px; }
.s-search { width: 30px; height: 30px; margin-right: 34px; }
.s-siri { width: 32px; height: 32px; margin-right: 24px; }
.s-list { width: 36px; height: 20px; }

/* Windows float freely on the desktop */
.window {
  position: absolute;
  display: flex;
  flex-direction: column;
  height: 1656px;
  border-radius: 10px;
  background: #fff;
}
.win-a { left: 6px; top: 46px; width: 978px; z-index: 3; box-shadow: 0 0 0 1px rgba(0, 30, 20, .45), 0 26px 76px rgba(0, 0, 0, .5); --col: 228px; }
.win-b { left: 986px; top: 48px; width: 988px; z-index: 2; box-shadow: 0 0 0 1px rgba(0, 30, 20, .45), 0 20px 60px rgba(0, 0, 0, .34); --col: 229.500px; }
.win-c { left: 1976px; top: 48px; width: 898px; z-index: 1; box-shadow: 0 0 0 1px rgba(0, 30, 20, .3), 0 10px 20px rgba(0, 0, 0, .3); --col: 212px; }

.tabstrip {
  --strip: #f6f6f6;
  --line: #a9a9a9;
  height: 74px;
  flex: none;
  display: flex;
  align-items: flex-end;
  padding: 0 21px 0 24px;
  border-radius: 10px 10px 0 0;
  background: var(--strip);
  border-bottom: 1px solid var(--line);
  font-size: 24px;
  letter-spacing: -0.1px;
}
.active .tabstrip { --strip: #bcd1c9; --line: #84978f; }
.lights { display: flex; gap: 16px; align-self: flex-start; margin: 26px 16px 0 0; }
.lights i { width: 24px; height: 24px; border-radius: 50%; background: #dcdcdc; border: 1px solid #cbcbcb; }
.active .lights i:nth-child(1) { background: #fc605c; border-color: #e2504c; }
.active .lights i:nth-child(2) { background: #fdbc40; border-color: #dfa033; }
.active .lights i:nth-child(3) { background: #34c84a; border-color: #2aad38; }
.tab {
  position: relative;
  width: 346px;
  height: 58px;
  margin-bottom: -1px;
  padding: 0 34px 0 35px;
  display: flex;
  align-items: center;
}
.tab.wide { width: 484px; }
.tab.behind { margin-right: -30px; }
.shape { position: absolute; inset: 0; width: 100%; height: 58px; fill: #f6f6f6; stroke: var(--line); stroke-width: 1.200; }
.active .front .shape { fill: #f2f2f2; }
.active .behind .shape { fill: #d0d0d0; }
.fav { position: relative; width: 26px; height: 30px; margin-right: 15px; }
.title { position: relative; flex: 1; white-space: nowrap; }
.fade {
  background: linear-gradient(90deg, #000 0, #000 155px, rgba(0, 0, 0, .12) 206px);
  -webkit-background-clip: text;
  background-clip: text;
  color: transparent;
}
.x { position: relative; width: 16px; height: 16px; }
.behind .x { margin-right: 2px; }
.newtab { width: 66px; height: 33px; margin: 0 0 7px -6px; fill: #dedede; stroke: #bdbdbd; }
.active .newtab { fill: #d0d0d0; stroke: #98a59f; }
.profile { margin: 0 0 18px auto; letter-spacing: -0.2px; }

.toolbar {
  height: 72px;
  flex: none;
  display: flex;
  align-items: center;
  padding-right: 32px;
  background: #f6f6f6;
  color: #9b9ca0;
}
.active .toolbar, .active .bookmarks { background: #f2f2f2; }
.active .toolbar { color: #717479; padding-right: 0; }
.nav { display: flex; gap: 28px; padding: 0 23px 0 22px; }
.nav svg { width: 28px; height: 28px; }
.nav .off { opacity: .25; }
.url {
  flex: 1;
  height: 54px;
  display: flex;
  align-items: center;
  padding: 0 14px 0 13px;
  background: #fff;
  border: 1px solid #b9b9b9;
  border-radius: 6px;
  font-size: 27px;
  letter-spacing: 0.15px;
  color: #000;
}
.url.bleed { border-right: 0; border-radius: 6px 0 0 6px; padding-right: 32px; }
.url em { font-style: normal; color: #808080; }
.info { width: 28px; height: 28px; margin-right: 12px; }
.star { width: 30px; height: 30px; margin-left: auto; }
.ext { width: 32px; height: 32px; margin-left: 21px; }
.ext + .ext { margin-left: 32px; }
.dots { width: 8px; height: 28px; margin-left: 28px; fill: #8e9094; }
.bleed .dots { margin-left: auto; fill: #5f6368; }

.bookmarks {
  height: 48px;
  flex: none;
  display: flex;
  align-items: center;
  padding: 0 19px 10px 27px;
  background: #f6f6f6;
  border-bottom: 1px solid #b5b8b8;
  font-size: 24px;
  letter-spacing: 0;
  white-space: nowrap;
}
.apps { width: 26px; height: 26px; margin-right: 11px; }
.b1 { width: 87px; }
.b2 { width: 156px; }
.gm { width: 28px; height: 22px; margin-right: 10px; }
.more { margin-left: auto; color: #77797d; font-size: 26px; font-weight: 600; line-height: 30px; }

/* Chat page */
.topbar, .messages, .chatbar, .chatbar input { font-family: "Open Sans", "Noto Sans", sans-serif; font-size: 28px; }
.topbar {
  height: 122px;
  flex: none;
  display: flex;
  align-items: center;
  justify-content: space-between;
  padding: 0 64px 2px 40px;
  background: #ff654d;
  border-bottom: 2px solid #000;
}
.topbar h1 { font-size: 56px; line-height: 76px; font-weight: 700; }
.messages { flex: 1; padding: 37px 0 0 40px; line-height: 32px; white-space: nowrap; }
.notice { margin: -10px 0 30px; font-style: italic; letter-spacing: -0.04px; }
.msg { display: grid; grid-template-columns: var(--col) 1fr; margin-bottom: 40px; }
.chatbar {
  flex: none;
  display: flex;
  gap: 20px;
  height: 126px;
  padding: 20px;
  background: #ff654d;
  border-top: 2px solid #000;
  border-radius: 0 0 10px 10px;
}
.chatbar input {
  width: 100%;
  height: 84px;
  padding: 0 18px 2px;
  border: 2px solid #000;
  border-radius: 0;
  background: #fff;
  color: #000;
  outline: 0;
}
.chatbar input::placeholder { color: #757575; opacity: 1; }
.chatbar input.name { width: 336px; flex: none; }
.chatbar label { position: relative; flex: 1; }
.focus input {
  border-color: #2a64a0;
  box-shadow: 0 0 4px 3px rgba(95, 145, 215, .75), inset 0 0 0 3px #c6ddf8;
}
.focus::after { content: ""; position: absolute; left: 20px; top: 24px; width: 2px; height: 38px; background: #000; }

/* Dock */
.dock {
  position: absolute;
  z-index: 5;
  left: 62px;
  top: 1702px;
  width: 2756px;
  height: 98px;
  display: flex;
  padding: 10px 0 0 6px;
  border-radius: 10px 10px 0 0;
  background: linear-gradient(90deg, #4a6f95 0, #4a78a9 35%, #5084b6 65%, #5b90c2 88%, #5083b3 100%);
  box-shadow: 0 0 90px rgba(0, 0, 0, .19);
}
.app { width: 79.700px; flex: none; display: flex; flex-direction: column; align-items: center; }
.app svg { width: 72px; height: 72px; }
.petals { isolation: isolate; }
.petals rect { mix-blend-mode: multiply; }
.on::after { content: ""; width: 8px; height: 8px; margin-top: 4px; border-radius: 50%; background: #04082a; }
.divider { width: 2px; height: 70px; margin: 4px 16px 0 16px; background: #34699b; }
```
